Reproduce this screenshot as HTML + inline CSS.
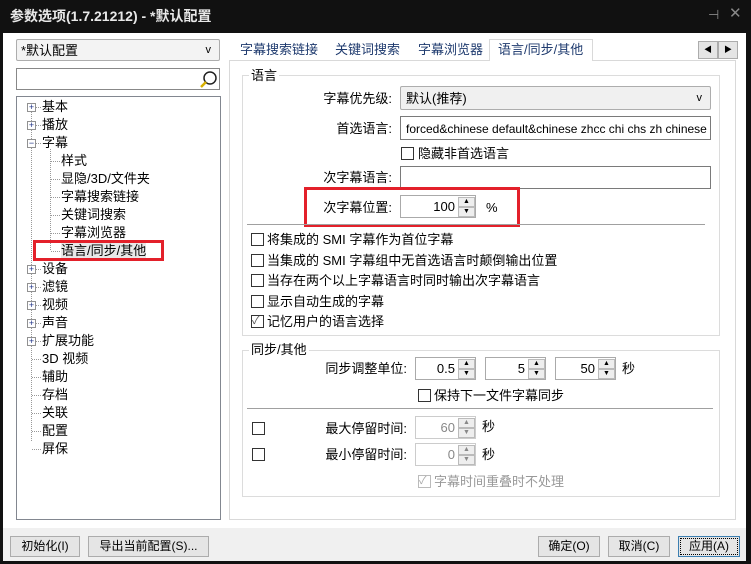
<!DOCTYPE html>
<html><head><meta charset="utf-8"><style>
*{box-sizing:border-box;margin:0;padding:0}
body{width:751px;height:564px;background:#111;position:relative;overflow:hidden;font:13px/16px "Liberation Sans","Noto Sans CJK SC",sans-serif;color:#000}
.a{position:absolute;white-space:nowrap}
.box{position:absolute;border:1px solid #adadad;background:#fff}
.cb{position:absolute;width:13px;height:13px;border:1px solid #333;background:#fff}
.lbl{position:absolute;white-space:nowrap;text-align:right}
.spin{position:absolute;height:23px;border:1px solid #aaa;background:#fff;text-align:right}
.spin span{position:absolute;right:20px;top:3px}
.spin i{position:absolute;right:0;width:17px;height:10px;border:1px solid #bbb;background:#eee;font-style:normal;font-size:7px;line-height:8px;text-align:center;color:#000}
.btn{position:absolute;height:21px;border:1px solid #acacac;background:#e5e5e5;text-align:center;line-height:19px;font-size:12px}
.grp{position:absolute;border:1px solid #dcdcdc}
.leg{position:absolute;background:#fff;padding:0 2px}
.t{position:absolute;white-space:nowrap;font-size:12.5px}
.pl{position:absolute;width:9px;height:9px;border:1px solid #919191;background:#fff;font-size:9px;line-height:7px;text-align:center;color:#1e3287}
</style></head><body>
<div class="a" style="left:10px;top:8px;color:#e8e8e8;font-size:14px;font-weight:bold">参数选项(1.7.21212) - *默认配置</div>
<div class="a" style="left:708px;top:7px;color:#888;font-size:13px">⊣</div>
<div class="a" style="left:729px;top:6px;color:#888;font-size:15px">✕</div>
<div class="a" style="left:3px;top:33px;width:743px;height:495px;background:#fff"></div>
<div class="a" style="left:3px;top:528px;width:743px;height:33px;background:#f0f0f0"></div>

<div class="box" style="left:16px;top:39px;width:204px;height:22px;background:#f3f3f3;border-radius:2px"><span class="a" style="left:4px;top:3px">*默认配置</span><span class="a" style="right:8px;top:2px;font-size:11px">v</span></div>
<div class="box" style="left:16px;top:68px;width:204px;height:22px;border-color:#888"><svg class="a" style="right:1px;top:1px" width="20" height="19"><circle cx="12" cy="8" r="6" fill="none" stroke="#222" stroke-width="1.5"/><line x1="8" y1="12" x2="3" y2="17" stroke="#d8b000" stroke-width="2.5"/></svg></div>
<div class="box" style="left:16px;top:96px;width:205px;height:424px;border-color:#828790"></div>
<div class="a" style="left:31px;top:111px;height:330px;border-left:1px dotted #999"></div>
<div class="a" style="left:50px;top:149px;height:101px;border-left:1px dotted #999"></div>
<div id="tree"></div>
<div class="a" style="left:33px;top:240px;width:131px;height:21px;border:3px solid #e3202a"></div>

<div class="a" style="left:229px;top:60px;width:507px;height:460px;border:1px solid #d9d9d9;background:#fff"></div>
<div class="t" style="left:240px;top:42px;color:#1e3a6e;font-size:13px">字幕搜索链接</div>
<div class="t" style="left:335px;top:42px;color:#1e3a6e;font-size:13px">关键词搜索</div>
<div class="t" style="left:418px;top:42px;color:#1e3a6e;font-size:13px">字幕浏览器</div>
<div class="a" style="left:489px;top:39px;width:104px;height:22px;border:1px solid #d9d9d9;border-bottom:none;background:#fff"></div>
<div class="t" style="left:498px;top:42px;color:#1e3a6e;font-size:13px">语言/同步/其他</div>
<div class="btn" style="left:698px;top:41px;width:20px;height:18px;line-height:15px;font-size:8px">◀</div>
<div class="btn" style="left:718px;top:41px;width:20px;height:18px;line-height:15px;font-size:8px">▶</div>

<div class="grp" style="left:242px;top:75px;width:478px;height:261px"></div>
<div class="leg" style="left:249px;top:68px">语言</div>
<div class="lbl" style="left:300px;top:91px;width:92px">字幕优先级:</div>
<div class="box" style="left:400px;top:86px;width:311px;height:24px;background:#f0f0f0;border-radius:2px"><span class="a" style="left:5px;top:4px">默认(推荐)</span><span class="a" style="right:8px;top:3px;font-size:11px">v</span></div>
<div class="lbl" style="left:300px;top:121px;width:92px">首选语言:</div>
<div class="box" style="left:400px;top:116px;width:311px;height:24px;border-color:#7a7a7a"><span class="a" style="left:5px;top:4px;font-size:12px">forced&amp;chinese default&amp;chinese zhcc chi chs zh chinese</span></div>
<div class="cb" style="left:401px;top:147px"></div><div class="a" style="left:418px;top:146px">隐藏非首选语言</div>
<div class="lbl" style="left:300px;top:170px;width:92px">次字幕语言:</div>
<div class="box" style="left:400px;top:166px;width:311px;height:23px;border-color:#7a7a7a"></div>
<div class="lbl" style="left:300px;top:200px;width:92px">次字幕位置:</div>
<div class="spin" style="left:400px;top:195px;width:76px"><span>100</span><i style="top:1px">▲</i><i style="top:11px">▼</i></div>
<div class="a" style="left:486px;top:200px">%</div>
<div class="a" style="left:304px;top:187px;width:216px;height:40px;border:3px solid #e3202a"></div>
<div class="a" style="left:247px;top:224px;width:458px;border-top:1px solid #a0a0a0"></div>
<div class="cb" style="left:251px;top:233px"></div><div class="a" style="left:267px;top:232px">将集成的 SMI 字幕作为首位字幕</div>
<div class="cb" style="left:251px;top:254px"></div><div class="a" style="left:267px;top:253px">当集成的 SMI 字幕组中无首选语言时颠倒输出位置</div>
<div class="cb" style="left:251px;top:274px"></div><div class="a" style="left:267px;top:273px">当存在两个以上字幕语言时同时输出次字幕语言</div>
<div class="cb" style="left:251px;top:295px"></div><div class="a" style="left:267px;top:294px">显示自动生成的字幕</div>
<div class="cb" style="left:251px;top:315px;font-size:11px;line-height:11px;color:#555">✓</div><div class="a" style="left:267px;top:314px">记忆用户的语言选择</div>

<div class="grp" style="left:242px;top:350px;width:478px;height:147px"></div>
<div class="leg" style="left:249px;top:342px">同步/其他</div>
<div class="lbl" style="left:300px;top:361px;width:107px">同步调整单位:</div>
<div class="spin" style="left:415px;top:357px;width:61px"><span>0.5</span><i style="top:1px">▲</i><i style="top:11px">▼</i></div>
<div class="spin" style="left:485px;top:357px;width:61px"><span>5</span><i style="top:1px">▲</i><i style="top:11px">▼</i></div>
<div class="spin" style="left:555px;top:357px;width:61px"><span>50</span><i style="top:1px">▲</i><i style="top:11px">▼</i></div>
<div class="a" style="left:622px;top:361px">秒</div>
<div class="cb" style="left:418px;top:389px"></div><div class="a" style="left:434px;top:388px">保持下一文件字幕同步</div>
<div class="a" style="left:247px;top:408px;width:466px;border-top:1px solid #a0a0a0"></div>
<div class="cb" style="left:252px;top:422px"></div>
<div class="lbl" style="left:300px;top:421px;width:107px">最大停留时间:</div>
<div class="spin" style="left:415px;top:416px;width:61px;border-color:#ccc;color:#888"><span>60</span><i style="top:1px;color:#888">▲</i><i style="top:11px;color:#888">▼</i></div>
<div class="a" style="left:482px;top:419px">秒</div>
<div class="cb" style="left:252px;top:448px"></div>
<div class="lbl" style="left:300px;top:447px;width:107px">最小停留时间:</div>
<div class="spin" style="left:415px;top:443px;width:61px;border-color:#ccc;color:#888"><span>0</span><i style="top:1px;color:#888">▲</i><i style="top:11px;color:#888">▼</i></div>
<div class="a" style="left:482px;top:447px">秒</div>
<div class="cb" style="left:418px;top:475px;border-color:#bbb;color:#aaa;font-size:11px;line-height:11px">✓</div><div class="a" style="left:434px;top:474px;color:#999">字幕时间重叠时不处理</div>

<div class="btn" style="left:10px;top:536px;width:70px">初始化(I)</div>
<div class="btn" style="left:88px;top:536px;width:121px">导出当前配置(S)...</div>
<div class="btn" style="left:538px;top:536px;width:62px">确定(O)</div>
<div class="btn" style="left:608px;top:536px;width:62px">取消(C)</div>
<div class="btn" style="left:678px;top:536px;width:62px;border:1px solid #3c7fb1;outline:1px dotted #000;outline-offset:-3px">应用(A)</div>
<script>
var items=[["基本",0,1],["播放",0,1],["字幕",0,2],["样式",1],["显隐/3D/文件夹",1],["字幕搜索链接",1],["关键词搜索",1],["字幕浏览器",1],["语言/同步/其他",1],["设备",0,1],["滤镜",0,1],["视频",0,1],["声音",0,1],["扩展功能",0,1],["3D 视频",0],["辅助",0],["存档",0],["关联",0],["配置",0],["屏保",0]];
var h="";items.forEach(function(it,i){var y=99+i*18;var x=it[1]?61:42;
if(it[1]){h+='<div class="a" style="left:51px;top:'+(y+8)+'px;width:9px;border-top:1px dotted #999"></div>';}
else{h+='<div class="a" style="left:32px;top:'+(y+8)+'px;width:9px;border-top:1px dotted #999"></div>';}
if(it[2])h+='<div class="pl" style="left:27px;top:'+(y+4)+'px">'+(it[2]==1?'+':'−')+'</div>';
h+='<div class="t" style="left:'+x+'px;top:'+y+'px;font-size:13px;'+(i==8?'background:#e8e8e8':'')+'">'+it[0]+'</div>';});
document.getElementById("tree").innerHTML=h;
</script>
</body></html>
